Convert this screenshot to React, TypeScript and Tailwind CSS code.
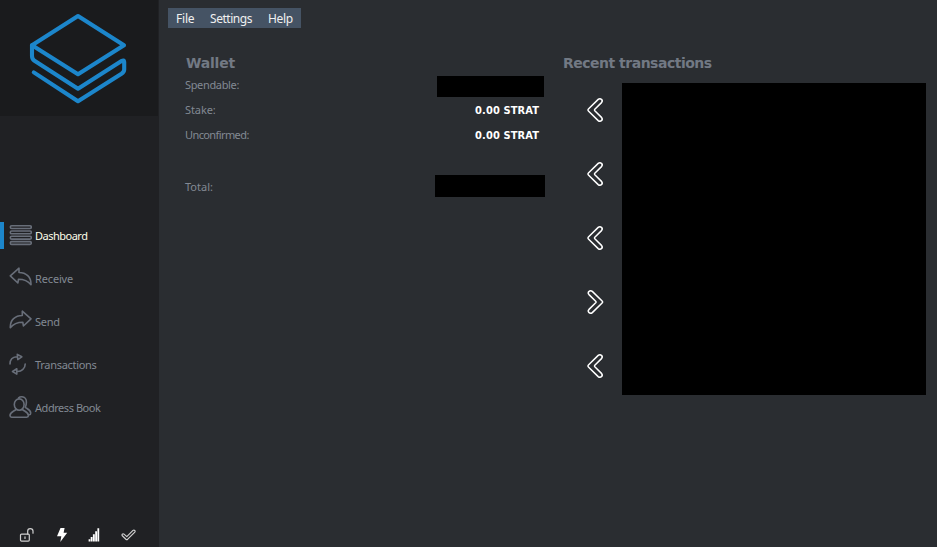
import React from "react";

const icon = {
  fill: "none",
  stroke: "currentColor",
  strokeLinecap: "round" as const,
  strokeLinejoin: "round" as const,
};

function Logo() {
  return (
    <svg width="158" height="116" viewBox="0 0 158 116" {...icon} stroke="#1c86cb" strokeWidth="4.1">
      <path d="M78 16 124 45.3 78 74.2 32 45.3Z" />
      <path d="M32 45.3V56Q32 59 34.5 60.8L78 88.7 121.5 61Q124.2 59.5 124.2 62V69.5Q124.2 72 121.5 73.8L78 101.2 33.8 72.4" />
    </svg>
  );
}

function StackIcon() {
  return (
    <svg width="24" height="24" viewBox="0 0 24 24" {...icon} strokeWidth="1.6">
      <rect x="2.3" y="2.7" width="21" height="2.8" rx="1.4" />
      <rect x="2.3" y="8" width="21" height="2.8" rx="1.4" />
      <rect x="2.3" y="13.3" width="21" height="2.8" rx="1.4" />
      <rect x="2.3" y="18.6" width="21" height="2.8" rx="1.4" />
    </svg>
  );
}

const replyPath = "M2.3 9.8 11 2.2V6.5C18 6.5 23.3 10.8 23 18.8 19.8 14.7 16.2 13.2 10.5 13.2L9.9 17Z";

function ReplyIcon() {
  return (
    <svg width="24" height="24" viewBox="0 0 24 24" {...icon} strokeWidth="1.6">
      <path d={replyPath} />
    </svg>
  );
}

function SendIcon() {
  return (
    <svg width="24" height="24" viewBox="0 0 24 24" {...icon} strokeWidth="1.6">
      <path d={replyPath} transform="translate(25.3 0) scale(-1 1)" />
    </svg>
  );
}

function CycleIcon() {
  return (
    <svg width="24" height="24" viewBox="0 0 24 24" {...icon} strokeWidth="1.6">
      <path d="M2 12C2 7.8 4.8 5.1 8.8 4.8M9.3 2.4 13.8 4.8 9.8 7.6Z" />
      <path d="M17.2 12C17.2 16.4 13.7 19.3 9.5 19.5M8.8 16.8 4.5 19.5 8.8 22.1Z" />
    </svg>
  );
}

function PeopleIcon() {
  return (
    <svg width="24" height="24" viewBox="0 0 24 24" {...icon} strokeWidth="1.6">
      <ellipse cx="11.2" cy="9.6" rx="4.9" ry="5.7" />
      <path d="M7.9 14.6C6 16.4 2 17 2 20.6 2 21.7 2.6 22.2 3.6 22.2H18.8C19.8 22.2 20.4 21.7 20.4 20.6 20.4 17 16.4 16.4 14.5 14.6" />
      <path d="M10.6 2.9C11.5 2 12.7 1.7 14 1.8 16.8 2 18.6 4.3 18.4 7.4 18.3 9.8 17.9 11 17.3 12.3 19.5 14 22.7 15 22.7 18 22.7 19.2 22.2 19.8 21.4 19.8" />
    </svg>
  );
}

function Chevron({ out = false }: { out?: boolean }) {
  return (
    <svg width="18" height="26" viewBox="0 0 18 26" {...icon} className={out ? "rotate-180" : "translate-x-[0.5px]"} strokeWidth="1.5">
      <path d="M1.9 12 11.7 2.4C12.7 1.5 14.2 1.5 15 2.4 15.9 3.3 15.9 4.6 15 5.6L8.3 12.2Q7.6 13 8.3 13.8L15 20.4C15.9 21.4 15.9 22.7 15 23.6 14.2 24.5 12.7 24.5 11.7 23.6L1.9 14Q.9 13 1.9 12Z" />
    </svg>
  );
}

const nav = [
  { label: "Dashboard", Icon: StackIcon, track: "tracking-[-0.5px]" },
  { label: "Receive", Icon: ReplyIcon, track: "tracking-[-0.15px]" },
  { label: "Send", Icon: SendIcon, track: "tracking-[-0.3px]" },
  { label: "Transactions", Icon: CycleIcon, track: "tracking-[-0.3px]" },
  { label: "Address Book", Icon: PeopleIcon, track: "tracking-[-0.45px]" },
];

function Sidebar() {
  return (
    <aside className="flex w-[159px] shrink-0 flex-col bg-[#202124]">
      <div className="h-[116px] w-[158px] bg-[#1a1b1d]">
        <Logo />
      </div>
      <nav className="mt-[106px] flex flex-col gap-4">
        {nav.map(({ label, Icon, track }, i) => (
          <div key={label} className="flex h-[27px] items-center text-[#686e79]">
            <div className={i === 0 ? "h-full w-1 bg-[#1c86cb]" : "h-full w-1"} />
            <div className="ml-1 w-[27px] -translate-y-px">
              <Icon />
            </div>
            <span className={`text-[11px] leading-4 ${track} ${i === 0 ? "text-[#fdfde8]" : "text-[#828993]"}`}>{label}</span>
          </div>
        ))}
      </nav>
      <div className="mt-auto flex h-6 items-center pl-[19px] text-[#cfcfcf]">
        <svg width="16" height="16" viewBox="0 0 16 16" {...icon} strokeWidth="1.2">
          <rect x="1.5" y="7.1" width="8.8" height="7" rx="1" />
          <path d="M8.7 7V4Q8.7 1.6 11.2 1.6 14 1.6 14 4V6.2M6 9.8V11.5" />
        </svg>
        <svg className="ml-[21px] text-white" width="12" height="16" viewBox="0 0 12 16" fill="currentColor">
          <path d="M4.5 1H8.6L7.6 5.8H11.2L4.3 15 5.3 9.2H1Z" />
        </svg>
        <svg className="ml-5 text-white" width="12" height="16" viewBox="0 0 12 16" fill="currentColor">
          <path d="M.6 12.2h1.7v2.3H.6zM2.7 10h1.8v4.5H2.7zM4.9 7.2h1.9v7.3H4.9zM7.2 4.3H9v10.2H7.2zM9.4 1.3h1.8v13.2H9.4z" />
        </svg>
        <svg className="ml-5" width="18" height="16" viewBox="0 0 18 16" {...icon} strokeWidth="1.2">
          <path d="M4 7.1 6.8 9.6 13 3.4Q13.9 2.7 14.8 3.5 15.5 4.2 14.8 5.1L7.7 12.2Q6.8 13 5.9 12.2L2.3 8.8Q1.6 8 2.3 7.2 3.1 6.4 4 7.1Z" />
        </svg>
      </div>
    </aside>
  );
}

function Row({ label, track, children }: { label: string; track: string; children: React.ReactNode }) {
  return (
    <div className="flex h-[25px] items-center justify-between text-[11px] leading-4 text-[#828993]">
      <span className={track}>{label}</span>
      {children}
    </div>
  );
}

const Amount = () => (
  <span className="mt-[2px] mr-[6px] font-['DejaVu_Sans_Condensed','DejaVu_Sans',sans-serif] text-[11px] font-bold tracking-[0.1px] text-white">0.00 STRAT</span>
);

export default function App() {
  return (
    <div className="flex h-[547px] w-[937px] overflow-hidden bg-[#2a2d31] font-['Noto_Sans',sans-serif]">
      <Sidebar />
      <main className="flex flex-1 flex-col">
        <div className="mt-2 ml-[9px] flex h-5 w-[133px] items-center bg-[#455364] pt-[2px] pl-2 text-xs text-[#f0f0f0]">
          <span className="w-[34px] tracking-[-0.2px]">File</span>
          <span className="w-[58px] tracking-[-0.45px]">Settings</span>
          <span className="tracking-[-0.3px]">Help</span>
        </div>
        <div className="flex">
          <section className="mt-[25px] ml-[26px] w-[360px]">
            <h2 className="h-[19px] pl-px font-['DejaVu_Sans',sans-serif] text-[14px] leading-[21px] font-bold tracking-[-0.2px] text-[#727984]">Wallet</h2>
            <Row label="Spendable:" track="tracking-[-0.35px]">
              <div className="mt-1 mr-px h-[21px] w-[107px] bg-black" />
            </Row>
            <Row label="Stake:" track="tracking-[-0.1px]"><Amount /></Row>
            <Row label="Unconfirmed:" track="tracking-[-0.6px]"><Amount /></Row>
            <div className="h-[27px]" />
            <Row label="Total:" track="tracking-[0px]">
              <div className="-mt-px h-[22px] w-[110px] bg-black" />
            </Row>
          </section>
          <section className="mt-[25px] ml-[18px]">
            <h2 className="h-[30px] font-['DejaVu_Sans',sans-serif] text-[14px] leading-[21px] font-bold tracking-[-0.5px] text-[#727984]">Recent transactions</h2>
            <div className="flex">
              <div className="mt-[14px] ml-[23px] flex w-9 flex-col gap-[38px] text-white">
                <Chevron />
                <Chevron />
                <Chevron />
                <Chevron out />
                <Chevron />
              </div>
              <div className="h-[312px] w-[304px] bg-black" />
            </div>
          </section>
        </div>
      </main>
    </div>
  );
}
